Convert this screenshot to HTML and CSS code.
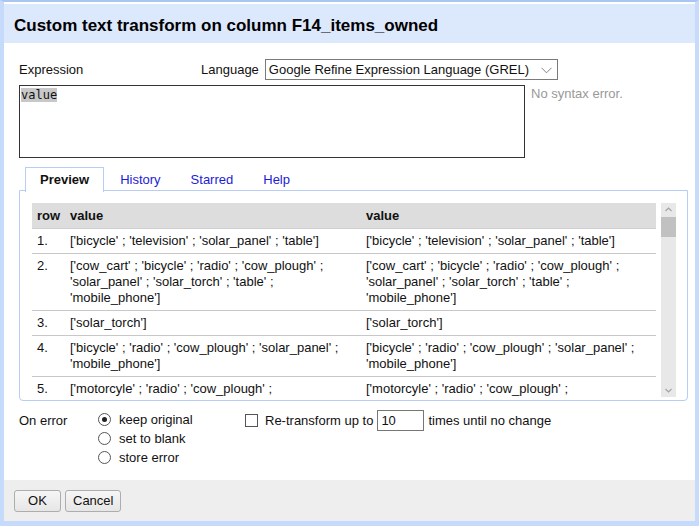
FILE: index.html
```html
<!DOCTYPE html>
<html>
<head>
<meta charset="utf-8">
<link rel="stylesheet" href="styles.css">
</head>
<body>
<div class="dialog">
  <div class="header">Custom text transform on column F14_items_owned</div>
  <div class="body">
    <div class="lang-row">
      <div class="expr-label">Expression</div>
      <div class="lang-label">Language</div>
      <div class="select-wrap">
        <select class="lang-select"><option>Google Refine Expression Language (GREL)</option></select>
        <svg class="chev" width="11" height="7" viewBox="0 0 11 7"><path d="M0.5 0.8 L5.5 5.8 L10.5 0.8" fill="none" stroke="#777" stroke-width="0.9"/></svg>
      </div>
    </div>
    <div class="expr-row">
      <div class="textarea"><span class="sel">value</span></div>
      <div class="status">No syntax error.</div>
    </div>
    <div class="tabs">
      <div class="tab active">Preview</div>
      <div class="tab">History</div>
      <div class="tab">Starred</div>
      <div class="tab">Help</div>
    </div>
    <div class="panel">
      <div class="table-wrap">
        <table class="preview">
          <colgroup><col class="c-row"><col class="c-val"><col></colgroup>
          <thead><tr><th>row</th><th>value</th><th>value</th></tr></thead>
          <tbody>
            <tr><td>1.</td><td>['bicycle' ; 'television' ; 'solar_panel' ; 'table']</td><td>['bicycle' ; 'television' ; 'solar_panel' ; 'table']</td></tr>
            <tr><td>2.</td><td>['cow_cart' ; 'bicycle' ; 'radio' ; 'cow_plough' ; 'solar_panel' ; 'solar_torch' ; 'table' ; 'mobile_phone']</td><td>['cow_cart' ; 'bicycle' ; 'radio' ; 'cow_plough' ; 'solar_panel' ; 'solar_torch' ; 'table' ; 'mobile_phone']</td></tr>
            <tr><td>3.</td><td>['solar_torch']</td><td>['solar_torch']</td></tr>
            <tr><td>4.</td><td>['bicycle' ; 'radio' ; 'cow_plough' ; 'solar_panel' ; 'mobile_phone']</td><td>['bicycle' ; 'radio' ; 'cow_plough' ; 'solar_panel' ; 'mobile_phone']</td></tr>
            <tr><td>5.</td><td>['motorcyle' ; 'radio' ; 'cow_plough' ; 'mobile_phone']</td><td>['motorcyle' ; 'radio' ; 'cow_plough' ; 'mobile_phone']</td></tr>
          </tbody>
        </table>
      </div>
      <div class="scrollbar">
        <svg class="arrow" width="15" height="14" viewBox="0 0 15 14"><path d="M4.5 8 L7.5 5 L10.5 8" fill="none" stroke="#a3a3a3" stroke-width="1.1"/></svg>
        <div class="thumb"></div>
        <div class="track"></div>
        <svg class="arrow" width="15" height="14" viewBox="0 0 15 14"><path d="M4.5 6 L7.5 9 L10.5 6" fill="none" stroke="#a3a3a3" stroke-width="1.1"/></svg>
      </div>
    </div>
    <div class="options">
      <div class="onerror-label">On error</div>
      <div class="radios">
        <label class="radio-line"><span class="radio checked"></span>keep original</label>
        <label class="radio-line"><span class="radio"></span>set to blank</label>
        <label class="radio-line"><span class="radio"></span>store error</label>
      </div>
      <div class="retransform">
        <span class="checkbox"></span>
        <span>Re-transform up to</span>
        <span class="num">10</span>
        <span>times until no change</span>
      </div>
    </div>
  </div>
  <div class="footer">
    <button class="btn ok">OK</button>
    <button class="btn">Cancel</button>
  </div>
</div>
</body>
</html>
```

FILE: styles.css
```css
html, body {
  margin: 0;
  padding: 0;
  background: #c3d9fb;
}
body {
  font-family: "Liberation Sans", Arial, sans-serif;
  font-size: 13px;
  color: #111;
}
.dialog {
  width: 691px;
  height: 519px;
  border-top: 2px solid #a9c6f3;
  border-left: 4px solid #c6dafb;
  border-right: 4px solid #c6dafb;
  border-bottom: 5px solid #c6dafb;
  background: #fff;
  display: flex;
  flex-direction: column;
}
.header {
  background: #dce8fc;
  height: 39px;
  margin-top: 2px;
  padding: 4px 0 0 10px;
  display: flex;
  align-items: center;
  font-size: 17px;
  font-weight: bold;
  color: #000;
  box-sizing: border-box;
  flex: none;
}
.body {
  flex: 1;
  padding: 15px 15px 0 15px;
}
.lang-row {
  display: flex;
  align-items: center;
  height: 22px;
}
.expr-label {
  width: 182px;
}
.lang-label {
  margin-right: 6px;
}
.select-wrap {
  position: relative;
}
.lang-select {
  appearance: none;
  -webkit-appearance: none;
  font-family: "Liberation Sans", Arial, sans-serif;
  font-size: 13px;
  color: #111;
  width: 293px;
  height: 21px;
  border: 1px solid #7a7a7a;
  border-radius: 0;
  background: #fff;
  padding: 0 0 0 3px;
  margin: 0;
}
.chev {
  position: absolute;
  right: 6px;
  top: 8px;
}
.expr-row {
  display: flex;
  margin-top: 5px;
}
.textarea {
  width: 506px;
  height: 73px;
  border: 1px solid #333;
  font-family: "DejaVu Sans Mono", "Liberation Mono", monospace;
  font-size: 12px;
  line-height: 16px;
  padding: 1px 1px;
  box-sizing: border-box;
}
.sel {
  background: #c8c8c8;
}
.status {
  margin-left: 6px;
  margin-top: 1px;
  color: #999;
  font-size: 13px;
}
.tabs {
  display: flex;
  margin-top: 9px;
  margin-left: 6px;
  height: 24px;
  position: relative;
  z-index: 1;
}
.tab {
  padding: 3px 14px 0 14px;
  border: 1px solid transparent;
  border-bottom: none;
  color: #1c1cd6;
  height: 24px;
  box-sizing: border-box;
  line-height: 17px;
}
.tab.active {
  color: #111;
  font-weight: bold;
  background: #fff;
  border-color: #b7cdf4;
  height: 25px;
  margin-right: 1px;
}
.panel {
  border: 1px solid #b7cdf4;
  border-radius: 0 0 4px 4px;
  width: 650px;
  height: 197px;
  padding: 12px 5px 0 12px;
  display: flex;
  margin-top: -1px;
}
.table-wrap {
  width: 624px;
  height: 194px;
  overflow: hidden;
}
.preview {
  width: 624px;
  border-collapse: collapse;
  table-layout: fixed;
}
.c-row { width: 33px; }
.c-val { width: 296px; }
.preview th {
  background: #dddddd;
  text-align: left;
  font-weight: bold;
  padding: 4px 5px;
  line-height: 16px;
  height: 17px;
  border-bottom: 1px solid #cfcfcf;
}
.preview td {
  padding: 4px 5px;
  line-height: 16px;
  vertical-align: top;
  border-bottom: 1px solid #c8c8c8;
}
.scrollbar {
  width: 15px;
  height: 194px;
  margin-left: 5px;
  background: #e8e8e8;
  display: flex;
  flex-direction: column;
}
.arrow {
  display: block;
  flex: none;
}
.thumb {
  height: 20px;
  background: #c1c1c1;
  flex: none;
}
.track {
  flex: 1;
}
.options {
  display: flex;
  margin-top: 12px;
}
.onerror-label {
  width: 79px;
}
.radios {
  display: flex;
  flex-direction: column;
  width: 147px;
}
.radio-line {
  display: flex;
  align-items: center;
  height: 19px;
  margin-top: -3px;
  margin-bottom: 3px;
}
.radio {
  width: 11px;
  height: 11px;
  border: 1px solid #555;
  border-radius: 50%;
  margin-right: 8px;
  box-sizing: content-box;
  position: relative;
  background: #fff;
}
.radio.checked::after {
  content: "";
  position: absolute;
  left: 3px;
  top: 3px;
  width: 5px;
  height: 5px;
  border-radius: 50%;
  background: #222;
}
.retransform {
  display: flex;
  align-items: center;
  height: 20px;
  margin-top: -3px;
}
.checkbox {
  width: 11px;
  height: 11px;
  border: 1px solid #555;
  margin-right: 7px;
  background: #fff;
}
.num {
  width: 42px;
  height: 19px;
  border: 1px solid #767676;
  margin: 0 4px;
  padding-left: 3px;
  line-height: 19px;
}
.footer {
  background: #eeeeee;
  height: 41px;
  padding-left: 10px;
  display: flex;
  align-items: center;
  gap: 4px;
  box-sizing: border-box;
  flex: none;
}
.btn {
  font-family: "Liberation Sans", Arial, sans-serif;
  font-size: 13px;
  color: #111;
  height: 22px;
  padding: 0 7px;
  border: 1px solid #adadad;
  border-radius: 3px;
  background: linear-gradient(#f6f6f6, #e6e6e6);
  margin: 0;
}
.btn.ok {
  width: 47px;
}
```
